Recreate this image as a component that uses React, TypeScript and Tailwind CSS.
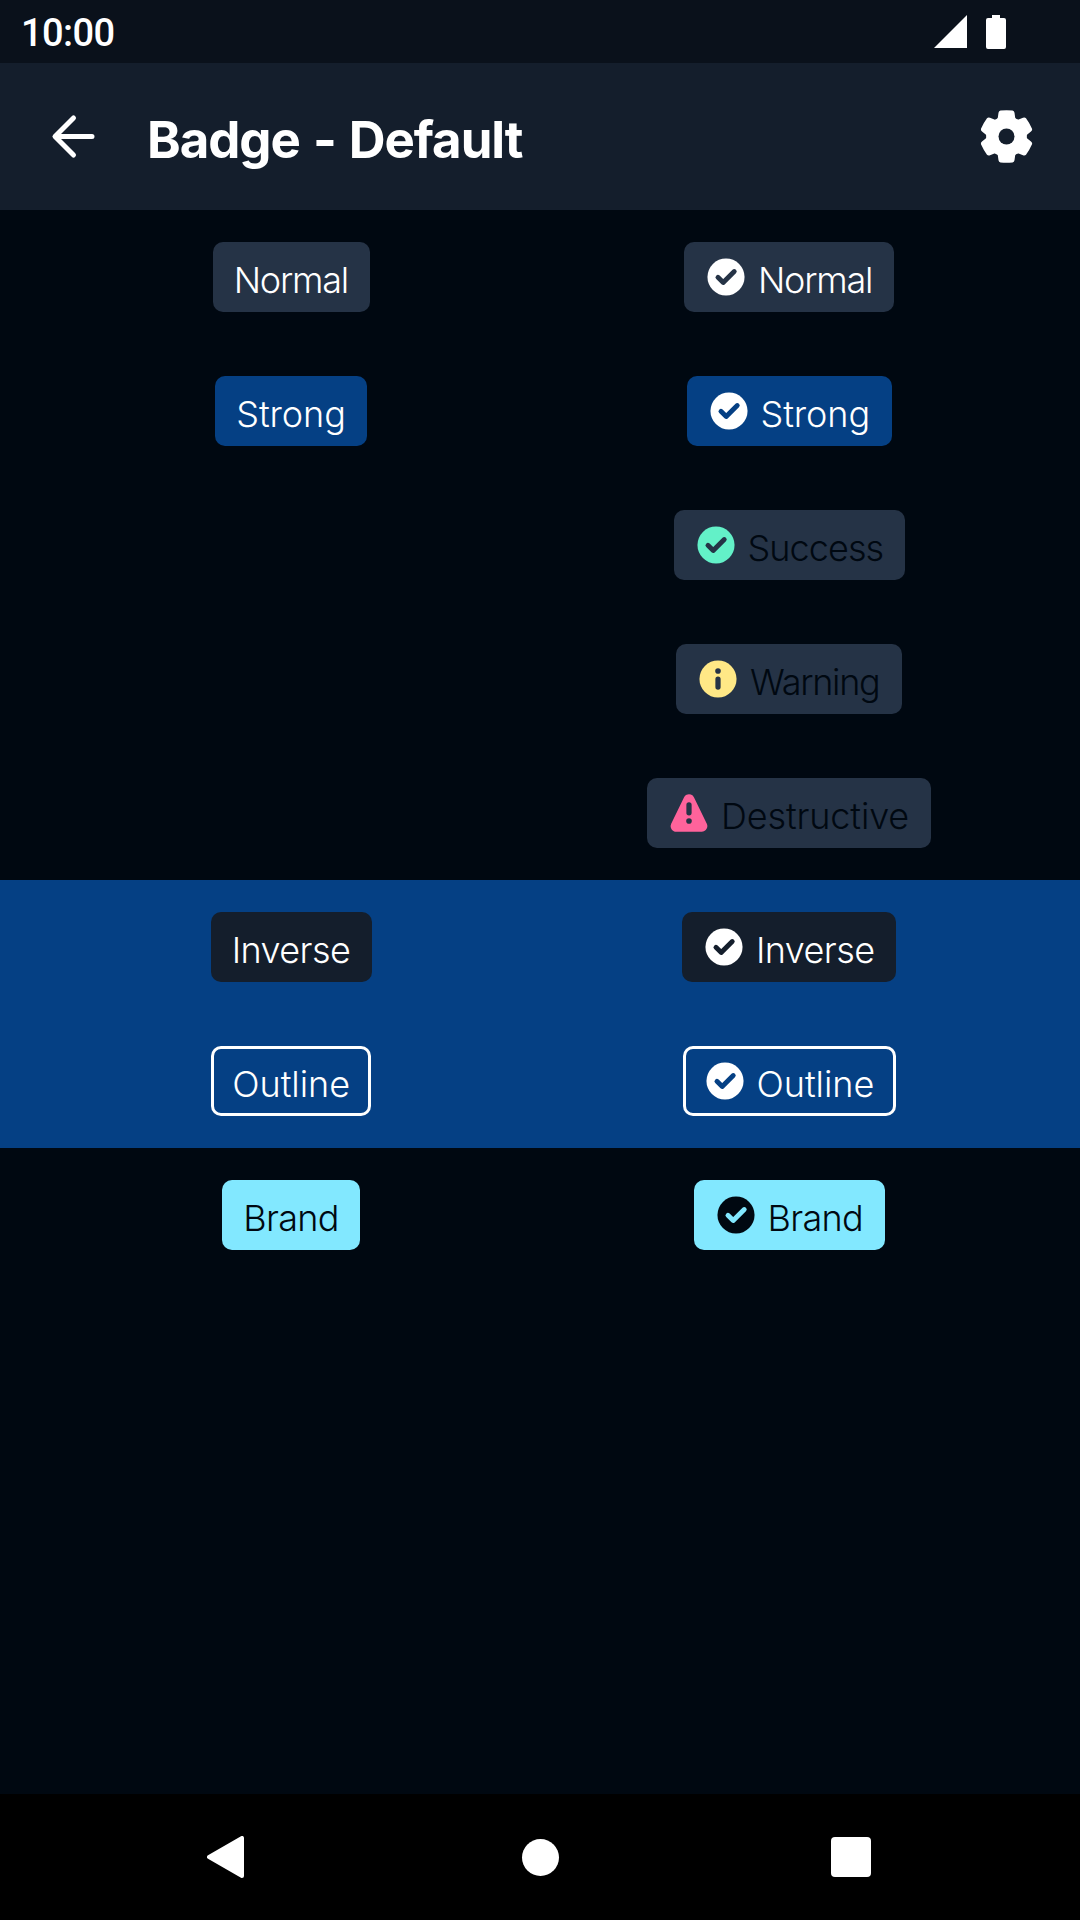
import React from "react";

type IconKind = "check" | "info" | "alert";

function BadgeIcon({ kind, color, cut }: { kind: IconKind; color: string; cut: string }) {
  return (
    <svg viewBox="0 0 24 24" className={`mr-[11px] size-[42px] shrink-0 ${color}`}>
      {kind === "alert" ? (
        <path
          d="M12 4.5 4.7 19.5h14.6z"
          fill="currentColor"
          stroke="currentColor"
          strokeWidth="6.4"
          strokeLinejoin="round"
        />
      ) : (
        <circle cx="12" cy="12" r="10.6" fill="currentColor" />
      )}
      <g className={cut} stroke="currentColor" fill="none" strokeLinecap="round" strokeLinejoin="round">
        {kind === "check" && <path d="M7.4 12.2l3 2.9 6.3-6.2" strokeWidth="2.8" />}
        {kind === "info" && (
          <>
            <path d="M12 12v4.6" strokeWidth="3" />
            <circle cx="12" cy="7.4" r="1.6" fill="currentColor" stroke="none" />
          </>
        )}
        {kind === "alert" && (
          <>
            <path d="M12 7.4v4.5" strokeWidth="3" />
            <circle cx="12" cy="16.6" r="1.6" fill="currentColor" stroke="none" />
          </>
        )}
      </g>
    </svg>
  );
}

interface BadgeProps {
  label: string;
  box: string;
  track: string;
  width: string;
  icon?: IconKind;
  iconColor?: string;
  cut?: string;
}

function Badge({ label, box, track, width, icon, iconColor = "text-white", cut = "" }: BadgeProps) {
  return (
    <div className={`flex h-[70px] items-center rounded-[10px] pl-[21px] ${width} ${box}`}>
      {icon && <BadgeIcon kind={icon} color={iconColor} cut={cut} />}
      <span className={`whitespace-nowrap pt-[6px] text-[36px] leading-[44px] font-[350] ${track}`}>{label}</span>
    </div>
  );
}

function Row({ left, right }: { left?: React.ReactNode; right: React.ReactNode }) {
  return (
    <div className="grid h-[134px] grid-cols-[582.5px_413px] items-center">
      <div className="flex justify-center">{left}</div>
      <div className="flex justify-center">{right}</div>
    </div>
  );
}

const TOOTH =
  "M-31-49Q-27-52-26-57L-24-71Q-23-77-18-78Q0-80 18-78Q23-77 24-71L26-57Q27-52 31-49L0 0Z";

export default function App() {
  return (
    <div className="flex h-[1920px] w-[1080px] flex-col overflow-hidden bg-[#000811] font-['Inter',sans-serif] text-white">
      <div className="flex h-[63px] shrink-0 items-center justify-between bg-[#0a111b] pl-[21px] pr-[74px]">
        <span className="pt-[3px] font-['Roboto',sans-serif] text-[38px] leading-none font-medium tracking-[-0.6px]">
          10:00
        </span>
        <div className="flex items-center gap-[19px]">
          <svg viewBox="0 0 34 34" className="size-[34px]">
            <path d="M34 0v33H1z" fill="currentColor" />
          </svg>
          <svg viewBox="0 0 20 34" className="h-[34px] w-[20px]">
            <path d="M6 0h8v3h4a2 2 0 0 1 2 2v27a2 2 0 0 1-2 2H2a2 2 0 0 1-2-2V5a2 2 0 0 1 2-2h4z" fill="currentColor" />
          </svg>
        </div>
      </div>

      <header className="flex h-[147px] shrink-0 items-center bg-[#141e2c] pl-[42px] pr-[42px]">
        <svg viewBox="0 0 63 63" className="size-[63px]">
          <path
            d="M31.5 13 13 31.5 31.5 50M13.5 31.5H50"
            fill="none"
            stroke="currentColor"
            strokeWidth="5"
            strokeLinecap="round"
            strokeLinejoin="round"
          />
        </svg>
        <h1 className="ml-[42px] flex-1 pt-[6px] text-[51px] leading-[60px] font-[650] tracking-[-1.05px] [word-spacing:2px]">
          Badge - Default
        </h1>
        <svg viewBox="-94.5 -94.5 189 189" className="size-[63px]">
          <g fill="currentColor">
            <circle r="61" />
            {[0, 60, 120, 180, 240, 300].map((a) => (
              <path key={a} d={TOOTH} transform={`rotate(${a})`} />
            ))}
          </g>
          <circle r="24" className="fill-[#141e2c]" />
        </svg>
      </header>

      <main className="flex-1">
        <Row
          left={<Badge label="Normal" box="bg-[#253346]" track="tracking-[-1.23px]" width="w-[157px]" />}
          right={<Badge label="Normal" box="bg-[#253346]" track="tracking-[-1.23px]" width="w-[210px]" icon="check" cut="text-[#253346]" />}
        />
        <Row
          left={<Badge label="Strong" box="bg-[#054084]" track="tracking-[-0.08px]" width="w-[152px]" />}
          right={<Badge label="Strong" box="bg-[#054084]" track="tracking-[-0.08px]" width="w-[205px]" icon="check" cut="text-[#054084]" />}
        />
        <Row
          right={<Badge label="Success" box="bg-[#253346] text-[#000811]" track="tracking-[-0.92px]" width="w-[231px]" icon="check" iconColor="text-[#63f1c8]" cut="text-[#253346]" />}
        />
        <Row
          right={<Badge label="Warning" box="bg-[#253346] text-[#000811]" track="tracking-[-1.3px]" width="w-[226px]" icon="info" iconColor="text-[#ffe886]" cut="text-[#253346]" />}
        />
        <Row
          right={<Badge label="Destructive" box="bg-[#253346] text-[#000811]" track="tracking-[-0.15px]" width="w-[284px]" icon="alert" iconColor="text-[#ff639b]" cut="text-[#253346]" />}
        />
        <section className="bg-[#054084]">
          <Row
            left={<Badge label="Inverse" box="bg-[#141e2c]" track="tracking-[-0.6px]" width="w-[161px]" />}
            right={<Badge label="Inverse" box="bg-[#141e2c]" track="tracking-[-0.6px]" width="w-[214px]" icon="check" cut="text-[#141e2c]" />}
          />
          <Row
            left={<Badge label="Outline" box="inset-ring-[3px] inset-ring-white" track="tracking-[-0.05px]" width="w-[160px]" />}
            right={<Badge label="Outline" box="inset-ring-[3px] inset-ring-white" track="tracking-[-0.05px]" width="w-[213px]" icon="check" cut="text-[#054084]" />}
          />
        </section>
        <Row
          left={<Badge label="Brand" box="bg-[#82e8ff] text-[#000811]" track="tracking-[-0.68px]" width="w-[138px]" />}
          right={<Badge label="Brand" box="bg-[#82e8ff] text-[#000811]" track="tracking-[-0.68px]" width="w-[191px]" icon="check" iconColor="text-[#000811]" cut="text-[#82e8ff]" />}
        />
      </main>

      <nav className="grid h-[126px] shrink-0 grid-cols-3 items-center bg-black pl-[207px] pr-[209px]">
        <svg viewBox="0 0 37 42" className="h-[42px] w-[37px]">
          <path d="M2 21 35 2v38z" fill="currentColor" stroke="currentColor" strokeWidth="4" strokeLinejoin="round" />
        </svg>
        <div className="ml-[3px] size-[37px] justify-self-center rounded-full bg-white" />
        <div className="size-[40px] justify-self-end rounded-[4px] bg-white" />
      </nav>
    </div>
  );
}
